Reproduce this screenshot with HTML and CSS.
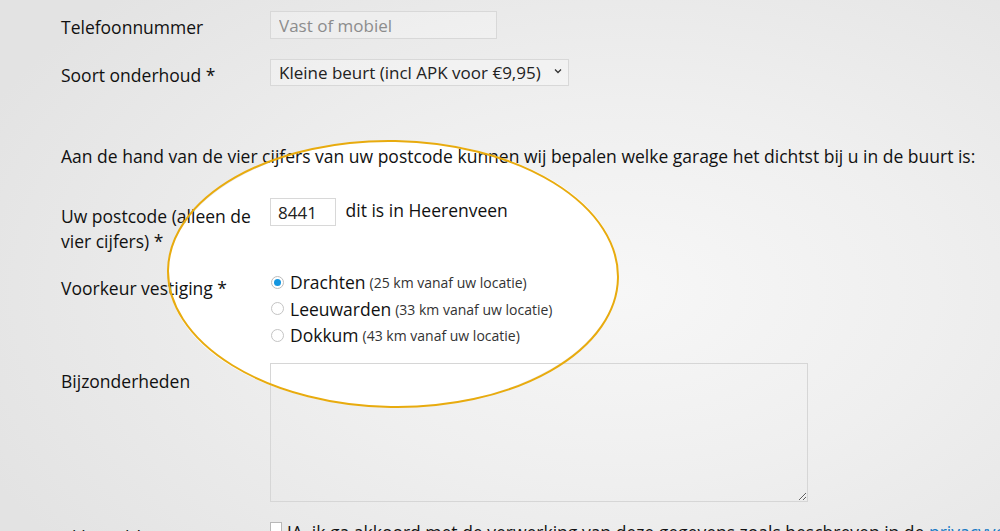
FILE: index.html
```html
<!DOCTYPE html>
<html lang="nl">
<head>
    <meta charset="UTF-8">
    <meta name="viewport" content="width=device-width, initial-scale=1.0">
    <title>Onderhoud afspraak</title>
    <link rel="stylesheet" href="styles.css">
</head>
<body>
    <!-- white highlight behind the postcode block -->
    <svg class="highlight highlight-fill" width="1000" height="531" viewBox="0 0 1000 531">
        <ellipse cx="393" cy="274" rx="225" ry="133" fill="#fff"/>
    </svg>

    <form class="form">
        <div class="row row-phone">
            <label class="label">Telefoonnummer</label>
            <div class="field">
                <input type="text" class="input input-phone" placeholder="Vast of mobiel">
            </div>
        </div>

        <div class="row row-service">
            <label class="label">Soort onderhoud *</label>
            <div class="field">
                <div class="select">
                    <span>Kleine beurt (incl APK voor €9,95)</span>
                    <svg class="chevron" width="8" height="6" viewBox="0 0 8 6">
                        <path d="M1 1.5 L4 4.5 L7 1.5" fill="none" stroke="#333" stroke-width="1.3"/>
                    </svg>
                </div>
            </div>
        </div>

        <p class="intro">Aan de hand van de vier cijfers van uw postcode kunnen wij bepalen welke garage het dichtst bij u in de buurt is:</p>

        <div class="row row-postcode">
            <label class="label">Uw postcode (alleen de vier cijfers) *</label>
            <div class="field">
                <input type="text" class="input input-postcode" value="8441">
                <span class="place">dit is in Heerenveen</span>
            </div>
        </div>

        <div class="row row-branch">
            <label class="label">Voorkeur vestiging *</label>
            <div class="field radios">
                <label class="radio"><span class="dot checked"></span>Drachten <small>(25 km vanaf uw locatie)</small></label>
                <label class="radio"><span class="dot"></span>Leeuwarden <small>(33 km vanaf uw locatie)</small></label>
                <label class="radio"><span class="dot"></span>Dokkum <small>(43 km vanaf uw locatie)</small></label>
            </div>
        </div>

        <div class="row row-notes">
            <label class="label">Bijzonderheden</label>
            <div class="field">
                <textarea class="notes"></textarea>
            </div>
        </div>

        <div class="row row-consent">
            <label class="label">Akkoord *</label>
            <div class="field consent">
                <span class="box"></span>
                <span>JA, ik ga akkoord met de verwerking van deze gegevens zoals beschreven in de <a href="#">privacyverklaring</a></span>
            </div>
        </div>
    </form>

    <!-- marker outline drawn over the form -->
    <svg class="highlight highlight-line" width="1000" height="531" viewBox="0 0 1000 531">
        <ellipse cx="393" cy="274" rx="225" ry="133" fill="none" stroke="#e8ab0e" stroke-width="2" transform="rotate(1 393 274)"/>
    </svg>
</body>
</html>
```

FILE: styles.css
```css
body {
    margin: 0;
    height: 531px;
    overflow: hidden;
    font-family: 'Open Sans', sans-serif;
    font-size: 17.5px;
    color: #111;
    background: radial-gradient(ellipse 70% 80% at 62% 55%, #f7f7f7 0%, #efefef 45%, #e3e3e3 100%);
    position: relative;
}

.highlight {
    position: absolute;
    top: 0;
    left: 0;
    pointer-events: none;
}

.highlight-fill {
    z-index: 0;
}

.highlight-line {
    z-index: 2;
}

.form {
    position: relative;
    z-index: 1;
    padding: 11px 0 0 61px;
}

.row {
    display: grid;
    grid-template-columns: 200px 1fr;
    column-gap: 9px;
    align-items: start;
}

.label {
    line-height: 25px;
    padding-top: 4px;
}

.input {
    font-family: inherit;
    font-size: 17px;
    color: #222;
    height: 28px;
    box-sizing: border-box;
    border: 1px solid #d8d8d8;
    background: rgba(255, 255, 255, 0.25);
    padding: 0 8px;
    outline: none;
}

.input::placeholder {
    color: #8c8c8c;
}

.input-phone {
    width: 227px;
}

.row-service {
    margin-top: 19px;
}

.select {
    display: inline-flex;
    align-items: center;
    justify-content: space-between;
    width: 299px;
    height: 27px;
    box-sizing: border-box;
    border: 1px solid #d8d8d8;
    background: rgba(255, 255, 255, 0.3);
    padding: 0 6px 0 8px;
    font-size: 17px;
    color: #222;
}

.chevron {
    margin-top: -3px;
}

.intro {
    margin: 56px 0 0;
    line-height: 25px;
}

.row-postcode {
    margin-top: 29px;
}

.row-postcode .label {
    padding-top: 6px;
}

.input-postcode {
    width: 66px;
    padding: 0 7px;
    vertical-align: top;
}

.place {
    margin-left: 5px;
    line-height: 25px;
    vertical-align: top;
}

.row-branch {
    margin-top: 15px;
}

.row-branch .label {
    padding-top: 7px;
}

.radios {
    display: flex;
    flex-direction: column;
}

.radio {
    display: flex;
    align-items: center;
    line-height: 26.5px;
    font-size: 17.5px;
}

.radio small {
    font-size: 14px;
    color: #333;
    margin-left: 4px;
    position: relative;
    top: 1px;
}

.dot {
    width: 13px;
    height: 13px;
    box-sizing: border-box;
    border-radius: 50%;
    border: 1px solid #c4c4c4;
    background: #fff;
    margin: 0 6px 0 1px;
    position: relative;
}

.dot.checked {
    border-color: #bcbcbc;
}

.dot.checked::after {
    content: "";
    position: absolute;
    top: 2px;
    left: 2px;
    width: 7px;
    height: 7px;
    border-radius: 50%;
    background: #1496e0;
}

.row-notes {
    margin-top: 14px;
}

.row-notes .label {
    padding-top: 6px;
}

.notes {
    display: block;
    width: 538px;
    height: 139px;
    box-sizing: border-box;
    border: 1px solid #d6d6d6;
    background: transparent;
    resize: both;
    font-family: inherit;
}

.row-consent {
    margin-top: 20px;
}

.row-consent .label {
    padding-top: 3px;
}

.consent {
    display: flex;
    align-items: flex-start;
    line-height: 20px;
    white-space: nowrap;
}

.box {
    width: 12px;
    height: 12px;
    box-sizing: border-box;
    border: 1px solid #b8b8b8;
    background: #fff;
    margin: 0 5px 0 0;
    flex-shrink: 0;
}

.consent a {
    color: #1a7ac4;
    text-decoration: none;
}
```
